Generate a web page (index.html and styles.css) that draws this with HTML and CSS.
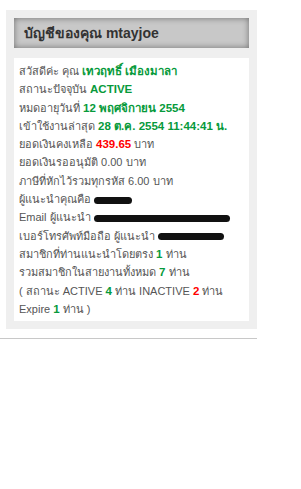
FILE: index.html
```html
<!DOCTYPE html>
<html lang="th">
<head>
  <meta charset="UTF-8">
  <title>บัญชีของคุณ</title>
  <link rel="stylesheet" href="styles.css">
</head>
<body>
  <div class="account-box">
    <div class="account-head">บัญชีของคุณ mtayjoe</div>
    <div class="account-body">
      <div class="line">สวัสดีค่ะ คุณ <b class="green">เทวฤทธิ์ เมืองมาลา</b></div>
      <div class="line">สถานะปัจจุบัน <b class="green">ACTIVE</b></div>
      <div class="line">หมดอายุวันที่ <b class="green">12 พฤศจิกายน 2554</b></div>
      <div class="line">เข้าใช้งานล่าสุด <b class="green">28 ต.ค. 2554 11:44:41 น.</b></div>
      <div class="line">ยอดเงินคงเหลือ <b class="red">439.65</b> บาท</div>
      <div class="line">ยอดเงินรออนุมัติ 0.00 บาท</div>
      <div class="line">ภาษีที่หักไว้รวมทุกรหัส 6.00 บาท</div>
      <div class="line">ผู้แนะนำคุณคือ <span class="blot blot-a"></span></div>
      <div class="line">Email ผู้แนะนำ <span class="blot blot-b"></span></div>
      <div class="line">เบอร์โทรศัพท์มือถือ ผู้แนะนำ <span class="blot blot-c"></span></div>
      <div class="line">สมาชิกที่ท่านแนะนำโดยตรง <b class="green">1</b> ท่าน</div>
      <div class="line">รวมสมาชิกในสายงานทั้งหมด <b class="green">7</b> ท่าน</div>
      <div class="line">( สถานะ ACTIVE <b class="green">4</b> ท่าน INACTIVE <b class="red">2</b> ท่าน</div>
      <div class="line">Expire <b class="green">1</b> ท่าน )</div>
    </div>
  </div>
  <hr class="rule">
</body>
</html>
```

FILE: styles.css
```css
body {
  margin: 0;
  padding: 10px 0 0 0;
  background-color: #fff;
  font-family: "Liberation Sans", sans-serif;
}

.account-box {
  margin-left: 6px;
  width: 235px;
  padding: 8px;
  background-color: #efefef;
}

.account-head {
  height: 30px;
  line-height: 30px;
  padding-left: 10px;
  background-color: #c8c8c8;
  box-shadow: inset 0 0 6px rgba(0, 0, 0, 0.45);
  color: #333;
  font-size: 14px;
  font-weight: bold;
}

.account-body {
  margin-top: 10px;
  background-color: #fff;
  padding: 4px 0 3px 5px;
  color: #555;
  font-size: 11px;
}

.line {
  height: 18.3px;
  line-height: 18.3px;
  white-space: nowrap;
}

.line b {
  font-size: 11.5px;
}

.green {
  color: #079a3b;
}

.red {
  color: #ff0000;
}

.blot {
  display: inline-block;
  height: 7px;
  vertical-align: middle;
  background-color: #111;
  border-radius: 4px;
}

.blot-a {
  width: 38px;
}

.blot-b {
  width: 136px;
}

.blot-c {
  width: 66px;
}

.rule {
  margin: 9px 0 0 0;
  width: 257px;
  border: none;
  border-top: 1px solid #c8c8c8;
}
```
